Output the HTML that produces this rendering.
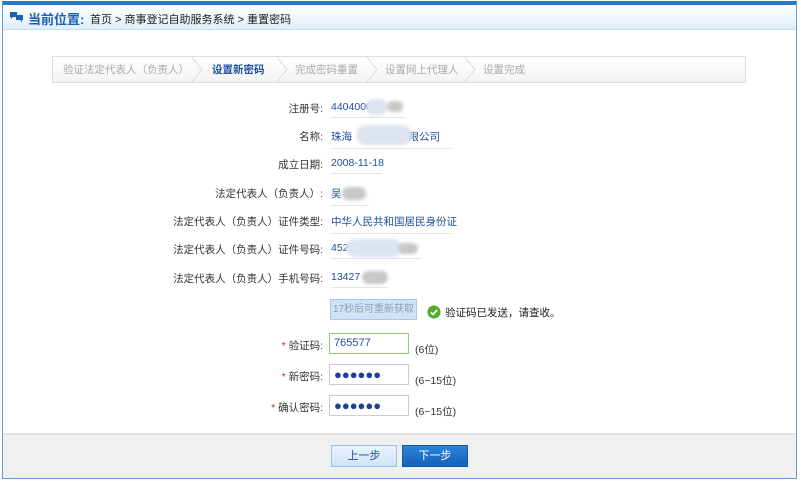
<!DOCTYPE html>
<html><head><meta charset="utf-8"><style>
*{margin:0;padding:0;box-sizing:border-box}
body{width:801px;height:485px;background:#fff;font-family:"Liberation Sans","Noto Sans CJK SC","WenQuanYi Zen Hei",sans-serif;font-size:11px;color:#333;position:relative;overflow:hidden}
.abs{position:absolute}
.frame{left:2px;top:1px;width:795px;height:478px;border:1px solid #5a9ee0;border-top:4px solid #2a78cc}
.hdr{left:3px;top:5px;width:793px;height:25px;background:linear-gradient(#fff,#dfeffa);border-bottom:1px solid #c4dcf0}
.loc{left:28px;top:9px;font-size:13px;font-weight:bold;color:#1d5fb0}
.crumb{left:90px;top:11px;font-size:11px;color:#222}
.steps{left:52px;top:56px;width:694px;height:27px;border:1px solid #ddd;background:linear-gradient(#fff,#f3f3f3)}
.st{top:62px;font-size:10.5px;color:#aaa;white-space:nowrap}
.arr{top:56px}
.lab{right:478px;font-size:10.5px;color:#333;text-align:right;white-space:nowrap}
.val{left:331px;font-size:10.5px;color:#1d4f9c;border-bottom:1px solid #dde4ee;padding-bottom:4px;white-space:nowrap}
.blur{background:#c8c8c8;border-radius:8px;filter:blur(1.5px)}
.blurl{background:#dde4ef;border-radius:10px;filter:blur(1.5px)}
.inp{left:329px;width:80px;height:21px;border:1px solid #ccc;font-size:11px;color:#1d4f9c;padding:3px 4px}
.dots{font-size:13px;line-height:12px;color:#1d3f9c}
.star{color:#e02020}
.hint{left:415px;font-size:10.5px;color:#333}
.foot{left:3px;top:433px;width:793px;height:45px;background:#f0f0f0;border-top:2px solid #e2e2e2}
.btn{top:445px;width:66px;height:22px;font-size:11px;text-align:center;line-height:20px}
</style></head><body>
<div class="abs frame"></div>
<div class="abs hdr"></div>
<svg class="abs" style="left:9px;top:11px" width="16" height="14" viewBox="0 0 16 14"><path d="M1 1h7v5H4l-2 2V6H1z" fill="#1d5fb0"/><path d="M7 4h7v5h-1v2l-2-2H7z" fill="#1d5fb0"/></svg>
<div class="abs loc">当前位置:</div>
<div class="abs crumb">首页 &gt; 商事登记自助服务系统 &gt; 重置密码</div>

<div class="abs steps"></div>
<div class="abs st" style="left:63px">验证法定代表人（负责人）</div>
<div class="abs st" style="left:212px;color:#1d4f9c;font-weight:bold">设置新密码</div>
<div class="abs st" style="left:295px">完成密码重置</div>
<div class="abs st" style="left:385px">设置网上代理人</div>
<div class="abs st" style="left:483px">设置完成</div>
<svg class="abs arr" style="left:190px" width="14" height="27"><path d="M1 0L12 13.5L1 27" fill="none" stroke="#ddd"/></svg>
<svg class="abs arr" style="left:275px" width="14" height="27"><path d="M1 0L12 13.5L1 27" fill="none" stroke="#ddd"/></svg>
<svg class="abs arr" style="left:365px" width="14" height="27"><path d="M1 0L12 13.5L1 27" fill="none" stroke="#ddd"/></svg>
<svg class="abs arr" style="left:463px" width="14" height="27"><path d="M1 0L12 13.5L1 27" fill="none" stroke="#ddd"/></svg>

<div class="abs lab" style="top:101px">注册号:</div>
<div class="abs val" style="top:101px;width:74px">4404000</div>
<div class="abs blurl" style="left:366px;top:99px;width:22px;height:16px"></div>
<div class="abs blur" style="left:387px;top:101px;width:16px;height:11px"></div>
<div class="abs lab" style="top:129px">名称:</div>
<div class="abs val" style="top:129px;width:120px">珠海<span style="display:inline-block;width:46px"></span>有限公司</div>
<div class="abs blurl" style="left:356px;top:125px;width:56px;height:20px"></div>
<div class="abs lab" style="top:157px">成立日期:</div>
<div class="abs val" style="top:157px;width:51px">2008-11-18</div>
<div class="abs lab" style="top:186px">法定代表人（负责人）:</div>
<div class="abs val" style="top:186px;width:38px">吴</div>
<div class="abs blur" style="left:342px;top:187px;width:24px;height:13px"></div>
<div class="abs lab" style="top:214px">法定代表人（负责人）证件类型:</div>
<div class="abs val" style="top:214px;width:120px">中华人民共和国居民身份证</div>
<div class="abs lab" style="top:242px">法定代表人（负责人）证件号码:</div>
<div class="abs val" style="top:242px;width:90px">452</div>
<div class="abs blurl" style="left:346px;top:239px;width:56px;height:18px"></div>
<div class="abs blur" style="left:398px;top:243px;width:20px;height:11px"></div>
<div class="abs lab" style="top:271px">法定代表人（负责人）手机号码:</div>
<div class="abs val" style="top:271px;width:56px">13427</div>
<div class="abs blur" style="left:362px;top:271px;width:26px;height:13px"></div>

<div class="abs" style="left:330px;top:299px;width:87px;height:21px;background:#cfe3f7;border:1px solid #a8c8ea;color:#8aa0b8;font-size:10px;text-align:center;line-height:19px;white-space:nowrap;overflow:hidden">17秒后可重新获取</div>
<svg class="abs" style="left:427px;top:305px" width="14" height="14"><circle cx="7" cy="7" r="6.5" fill="#4caf2a"/><path d="M3.8 7.2l2.2 2.2 4.2-4.4" stroke="#fff" stroke-width="1.8" fill="none"/></svg>
<div class="abs" style="left:445px;top:305px;font-size:10.5px;color:#222">验证码已发送，请查收。</div>

<div class="abs lab" style="top:338px"><span class="star">*</span> 验证码:</div>
<div class="abs inp" style="top:333px;border-color:#8fd06a">765577</div>
<div class="abs hint" style="top:342px">(6位)</div>
<div class="abs lab" style="top:369px"><span class="star">*</span> 新密码:</div>
<div class="abs inp dots" style="top:364px;padding-top:4px">●●●●●●</div>
<div class="abs hint" style="top:373px">(6~15位)</div>
<div class="abs lab" style="top:400px"><span class="star">*</span> 确认密码:</div>
<div class="abs inp dots" style="top:395px;padding-top:4px">●●●●●●</div>
<div class="abs hint" style="top:404px">(6~15位)</div>

<div class="abs foot"></div>
<div class="abs btn" style="left:331px;background:linear-gradient(#eaf4fe,#cfe3f8);border:1px solid #9cc2ea;color:#1d4f9c">上一步</div>
<div class="abs btn" style="left:402px;background:linear-gradient(#2a86d8,#1460b8);border:1px solid #1458a8;color:#fff">下一步</div>
</body></html>
